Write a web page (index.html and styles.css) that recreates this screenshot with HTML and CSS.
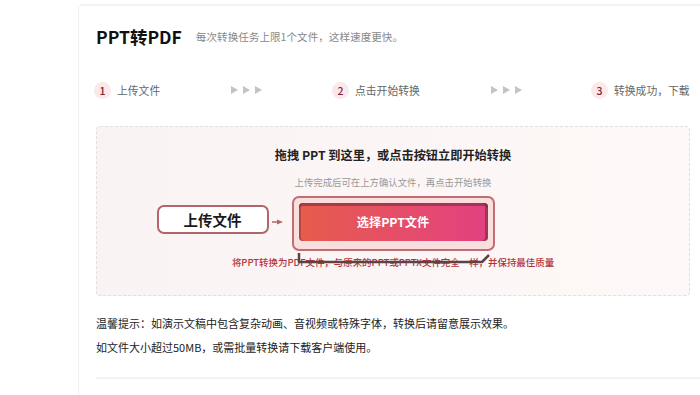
FILE: index.html
```html
<!DOCTYPE html>
<html lang="zh-CN">
<head>
    <meta charset="UTF-8">
    <meta name="viewport" content="width=device-width, initial-scale=1.0">
    <title>PPT转PDF</title>
    <link rel="stylesheet" href="styles.css">
</head>
<body>
    <div class="top-line"></div>

    <div class="card">
        <!-- Header -->
        <div class="header">
            <h1>PPT转PDF</h1>
            <span class="subtitle">每次转换任务上限1个文件，这样速度更快。</span>
        </div>

        <!-- Steps -->
        <div class="steps">
            <div class="step"><span class="num">1</span>上传文件</div>
            <div class="arrows"><i></i><i></i><i></i></div>
            <div class="step"><span class="num">2</span>点击开始转换</div>
            <div class="arrows"><i></i><i></i><i></i></div>
            <div class="step"><span class="num">3</span>转换成功，下载</div>
        </div>

        <!-- Upload area -->
        <div class="upload-box">
            <h2>拖拽 PPT 到这里，或点击按钮立即开始转换</h2>
            <p class="hint">上传完成后可在上方确认文件，再点击开始转换</p>

            <div class="button-wrap">
                <div class="callout">上传文件</div>
                <svg class="callout-arrow" width="12" height="6" viewBox="0 0 12 6">
                    <path d="M0 3 H6" stroke="#b4666c" stroke-width="1.5"/>
                    <path d="M5 0.5 L11 3 L5 5.5 Z" fill="#b4666c"/>
                </svg>
                <div class="button-outline">
                    <button class="select-btn">选择PPT文件</button>
                </div>
                <svg class="bracket" width="204" height="20" viewBox="0 0 204 20">
                    <path d="M7 4 V13 H190 L197 6" fill="none" stroke="#5b4348" stroke-width="2.5" stroke-linejoin="round"/>
                </svg>
            </div>

            <p class="desc">将PPT转换为PDF文件，与原来的PPT或PPTX文件完全一样，并保持最佳质量</p>
        </div>

        <!-- Tips -->
        <div class="tips">
            <p>温馨提示：如演示文稿中包含复杂动画、音视频或特殊字体，转换后请留意展示效果。</p>
            <p>如文件大小超过50MB，或需批量转换请下载客户端使用。</p>
        </div>
    </div>
</body>
</html>
```

FILE: styles.css
```css
/* Basic Reset */
* {
    margin: 0;
    padding: 0;
    box-sizing: border-box;
}

body {
    font-family: "Noto Sans CJK SC", "Noto Sans", sans-serif;
    background-color: #fff;
    color: #222;
    overflow: hidden;
}

.top-line {
    margin: 4px 0 0 80px;
    height: 2px;
    background-color: #f3f3f3;
}

.card {
    margin-left: 78px;
    border-left: 1px solid #f1f1f1;
    padding-left: 17px;
    height: 389px;
}

/* Header */
.header {
    display: flex;
    align-items: center;
    height: 60px;
}

.header h1 {
    font-size: 17.5px;
    font-weight: 700;
    color: #111;
}

.subtitle {
    margin-left: 14px;
    font-size: 10.6px;
    color: #888;
}

/* Steps */
.steps {
    display: grid;
    grid-template-columns: 137px 101px 159px 100px auto;
    align-items: center;
    height: 34px;
    margin-top: 7px;
    margin-left: -2px;
    white-space: nowrap;
}

.step {
    display: flex;
    align-items: center;
    font-size: 10.8px;
    color: #666;
}

.num {
    width: 17px;
    height: 17px;
    border-radius: 50%;
    background-color: #fbe9ea;
    color: #7e2832;
    font-size: 10.5px;
    font-weight: 500;
    display: flex;
    align-items: center;
    justify-content: center;
    margin-right: 6px;
}

.arrows {
    display: flex;
    gap: 5px;
}

.arrows i {
    width: 0;
    height: 0;
    border-top: 4px solid transparent;
    border-bottom: 4px solid transparent;
    border-left: 7px solid #c4c4c4;
}

/* Upload area */
.upload-box {
    margin-top: 19px;
    width: 594px;
    height: 170px;
    border: 1px dashed #e4dede;
    border-radius: 4px;
    background: linear-gradient(90deg, #faf3f4, #fdf6f6 60%, #fdf8f7);
    text-align: center;
}

.upload-box h2 {
    margin-top: 19px;
    font-size: 12.2px;
    font-weight: 700;
    color: #222;
    line-height: 18px;
}

.hint {
    margin-top: 11px;
    font-size: 9.4px;
    color: #999;
    line-height: 14px;
}

.button-wrap {
    position: relative;
    width: 203px;
    margin: 7px auto 0;
}

.button-outline {
    padding: 5px 5px 8px;
    border: 2px solid #c26d74;
    border-radius: 7px;
    background-color: #f9dede;
}

.select-btn {
    display: block;
    width: 100%;
    height: 38px;
    border: none;
    border-radius: 4px;
    background: linear-gradient(90deg, #e65c4c, #e4457a 85%, #e3407f);
    box-shadow: inset 0 3px 0 rgba(110, 40, 60, 0.55), inset -3px 0 0 rgba(110, 40, 60, 0.55), inset 2px 0 0 rgba(110, 40, 60, 0.4);
    color: #fff;
    font-family: inherit;
    font-size: 12.2px;
    font-weight: 700;
    cursor: pointer;
}

/* Annotation over the button */
.callout {
    position: absolute;
    left: -135px;
    top: 9px;
    width: 112px;
    height: 29px;
    border: 2px solid #b4656c;
    border-radius: 7px;
    background-color: #fff;
    font-size: 14.5px;
    font-weight: 700;
    line-height: 25px;
    color: #1a1a1a;
}

.callout-arrow {
    position: absolute;
    left: -20px;
    top: 23px;
}

.bracket {
    position: absolute;
    left: 0;
    top: 53px;
}

.desc {
    margin-top: 4px;
    font-size: 9.45px;
    font-weight: 500;
    color: #b3353c;
    line-height: 14px;
}

/* Tips */
.tips {
    margin-top: 15px;
    padding-bottom: 18px;
    border-bottom: 2px solid #f3f3f3;
}

.tips p {
    font-size: 11px;
    line-height: 24px;
    color: #222;
}
```
